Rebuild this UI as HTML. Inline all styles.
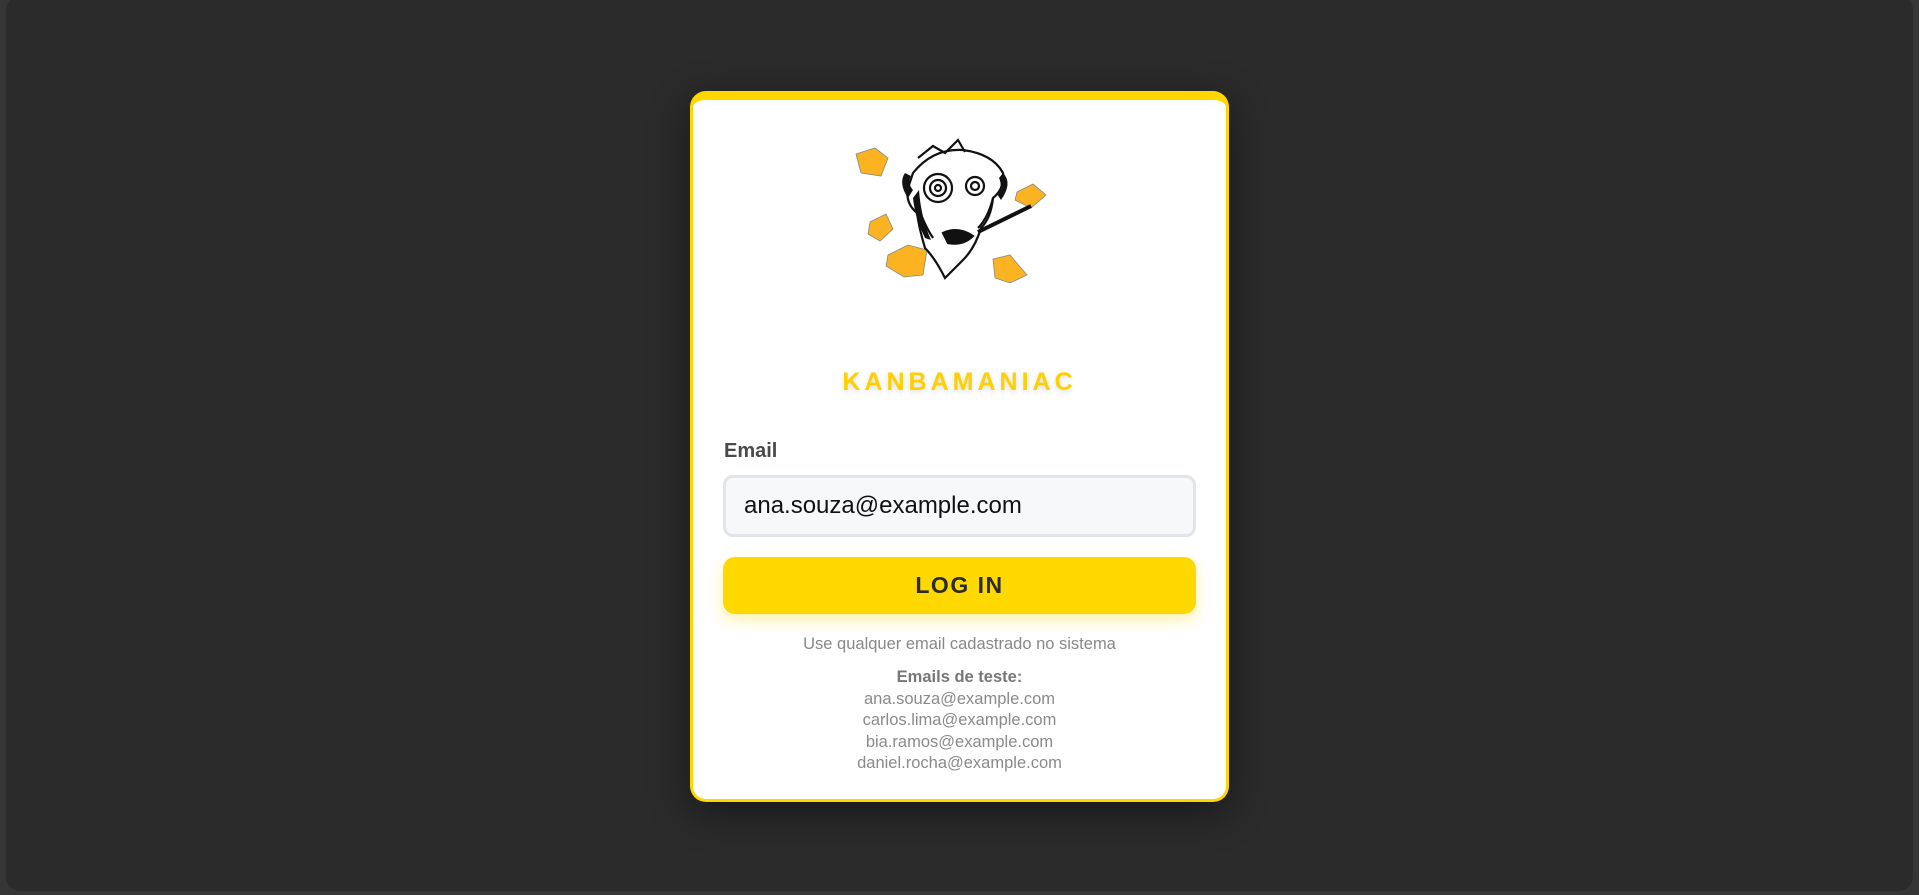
<!DOCTYPE html>
<html><head><meta charset="utf-8"><style>
html,body{margin:0;padding:0;width:1919px;height:895px;background:#363636;overflow:hidden;font-family:"Liberation Sans",sans-serif}
.panel{position:absolute;left:6px;top:-4px;right:6px;bottom:4px;background:#2b2b2b;border-radius:14px}
.card{position:absolute;left:690px;top:91px;width:533px;height:699px;background:#fff;border:3px solid #ffd700;border-top-width:9px;border-radius:16px;box-shadow:0 10px 40px rgba(0,0,0,.45)}
.logo{position:absolute;left:160px;top:28px}
.title{position:absolute;left:0;right:0;top:268px;text-align:center;color:#ffd000;font-weight:bold;font-size:25px;letter-spacing:4px;text-shadow:0 2px 6px rgba(0,0,0,.15)}
.label{position:absolute;left:31px;top:340px;font-size:20px;font-weight:bold;color:#4a4a4a}
.input{position:absolute;left:30px;top:375px;width:473px;height:62px;box-sizing:border-box;border:3px solid #e1e4e8;background:#f7f8fa;border-radius:10px;font-size:24px;color:#111;padding-left:18px;line-height:56px}
.btn{position:absolute;left:30px;top:457px;width:473px;height:57px;background:#ffd800;border-radius:12px;text-align:center;line-height:57px;font-weight:bold;font-size:23px;letter-spacing:1.5px;color:#2b2b2b;box-shadow:0 6px 16px rgba(255,215,0,.35)}
.hint{position:absolute;left:0;right:0;top:535px;text-align:center;font-size:16.5px;color:#888}
.emails{position:absolute;left:0;right:0;top:567px;text-align:center;font-size:16.5px;line-height:21.5px;color:#8a8a8a}
.emails b{color:#777}
</style></head><body>
<div class="panel"></div>
<div class="card">
<svg class="logo" width="210" height="170" viewBox="0 0 210 170">
<g fill="#fbb321" stroke="#888" stroke-width="0.8">
<path d="M3 26 L22 20 L35 30 L28 48 L8 45 Z"/>
<path d="M164 64 L180 56 L193 67 L178 80 L162 72 Z"/>
<path d="M17 94 L33 86 L40 101 L27 113 L15 106 Z"/>
<path d="M35 127 L55 117 L74 122 L70 147 L51 149 L33 138 Z"/>
<path d="M140 131 L157 127 L174 147 L157 155 L142 150 Z"/>
</g>
<g fill="none" stroke="#111" stroke-width="2.2">
<path d="M60 45 Q80 20 110 22 Q140 26 150 45 Q152 60 140 70 Q138 90 128 100 Q122 120 110 132 Q100 142 92 150 Q82 130 72 120 Q66 100 64 85 Q52 75 55 60 Z" fill="#fff"/>
<circle cx="85" cy="60" r="14"/><circle cx="85" cy="60" r="8"/><circle cx="85" cy="60" r="3"/>
<circle cx="122" cy="58" r="9"/><circle cx="122" cy="58" r="4"/>
<path d="M90 105 Q105 98 120 108 Q110 118 95 115 Z" fill="#111"/>
<path d="M125 104 L178 78" stroke-width="4"/>
<path d="M65 30 L80 18 L92 25 L105 12 L112 24" />
<path d="M62 70 Q70 95 80 110 M140 70 Q135 90 125 100"/>
</g>
<g fill="#111"><path d="M66 62 Q68 90 78 112 L72 110 Q62 90 60 70Z"/><path d="M52 45 Q45 55 55 70 L60 62 Q54 55 58 48Z"/><path d="M150 45 Q160 55 148 72 L144 66 Q150 58 146 50Z"/></g>
</svg>
<div class="title">KANBAMANIAC</div>
<div class="label">Email</div>
<div class="input">ana.souza@example.com</div>
<div class="btn">LOG IN</div>
<div class="hint">Use qualquer email cadastrado no sistema</div>
<div class="emails"><b>Emails de teste:</b><br>ana.souza@example.com<br>carlos.lima@example.com<br>bia.ramos@example.com<br>daniel.rocha@example.com</div>
</div>
</body></html>
